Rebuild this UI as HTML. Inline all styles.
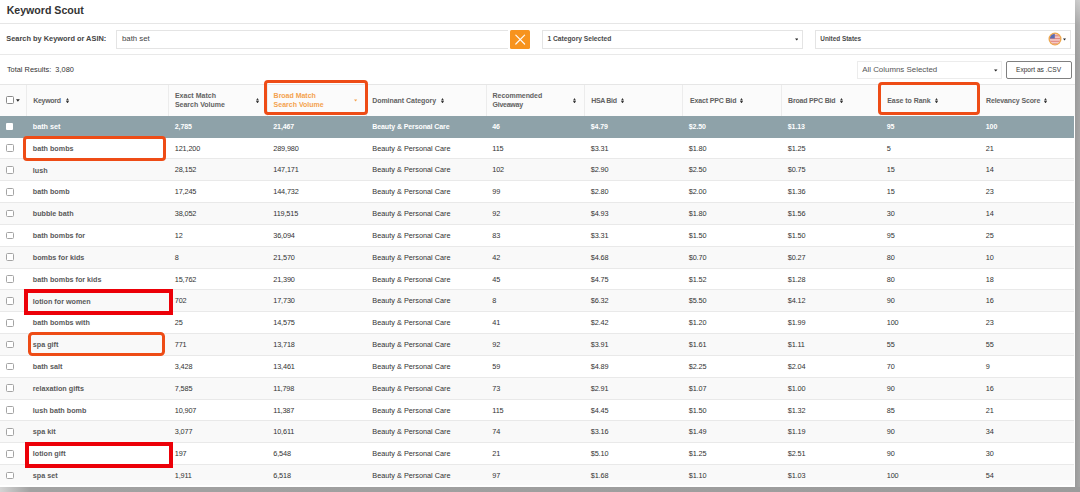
<!DOCTYPE html>
<html><head><meta charset="utf-8"><style>
html,body{margin:0;padding:0;}
body{width:1080px;height:492px;position:relative;overflow:hidden;background:#a4a4a4;font-family:"Liberation Sans", sans-serif;}
.t{position:absolute;white-space:nowrap;line-height:1;}
.b{position:absolute;}
.shr{position:absolute;left:1075px;top:0;width:5px;height:492px;background:linear-gradient(to bottom,rgba(255,255,255,0.45) 0px,rgba(255,255,255,0.1) 25px,rgba(255,255,255,0) 60px),linear-gradient(to right,#9a9a9a,#a6a6a6);}
.shb{position:absolute;left:0;top:487px;width:1080px;height:5px;background:linear-gradient(to right,#d4d4d4 0px,#a2a2a2 30px,#9c9c9c 100%);}
</style></head><body>
<div class="shr"></div><div class="shb"></div>
<div class="b" style="left:0.00px;top:0.00px;width:1075.00px;height:487.00px;background:#fff"></div>
<div class="t" style="left:6.70px;top:4.73px;font-size:10.6px;color:#333;font-weight:bold;letter-spacing:0px;">Keyword Scout</div>
<div class="b" style="left:0.00px;top:23.00px;width:1075.00px;height:1.00px;background:#e6e6e6"></div>
<div class="t" style="left:6.30px;top:34.94px;font-size:7.4px;color:#444444;font-weight:bold;letter-spacing:0px;">Search by Keyword or ASIN:</div>
<div class="b" style="left:116.30px;top:29.80px;width:391.70px;height:19.00px;border:1px solid #e4e4e4;border-right:none;box-sizing:border-box;background:#fff"></div>
<div class="t" style="left:122.00px;top:35.40px;font-size:7.8px;color:#444444;font-weight:normal;letter-spacing:0px;">bath set</div>
<div class="b" style="left:510.00px;top:30.00px;width:20.00px;height:19.00px;background:#f7931e;border-radius:1.5px"></div>
<svg class="b" style="left:510px;top:30px" width="20" height="19" viewBox="0 0 20 19"><path d="M5.8 5.2L14.6 14M14.6 5.2L5.8 14" stroke="#fff" stroke-width="1.2" stroke-linecap="round" opacity="0.95"/></svg>
<div class="b" style="left:542.00px;top:29.80px;width:261.40px;height:19.00px;border:1px solid #e4e4e4;box-sizing:border-box;background:#fff"></div>
<div class="t" style="left:547.40px;top:36.23px;font-size:6.7px;color:#4a4a4a;font-weight:bold;letter-spacing:0px;">1 Category Selected</div>
<svg class="b" style="left:794.95px;top:38.10px" width="3.5" height="3" viewBox="0 0 4 3"><path d="M0 0.3L4 0.3L2 2.7Z" fill="#222"/></svg>
<div class="b" style="left:815.20px;top:29.80px;width:256.30px;height:19.00px;border:1px solid #e4e4e4;box-sizing:border-box;background:#fff"></div>
<div class="t" style="left:820.30px;top:36.48px;font-size:6.4px;color:#4a4a4a;font-weight:bold;letter-spacing:0px;">United States</div>
<svg class="b" style="left:1047.5px;top:31.7px" width="14" height="14" viewBox="0 0 14 14"><defs><clipPath id="fc"><circle cx="7" cy="7" r="5.2"/></clipPath></defs><circle cx="7" cy="7" r="6.5" fill="#eda84e"/><g clip-path="url(#fc)"><rect x="0" y="0" width="14" height="14" fill="#f3c9c4"/><rect x="0" y="3.2" width="14" height="1.1" fill="#e48a86"/><rect x="0" y="6" width="14" height="1.1" fill="#e48a86"/><rect x="0" y="8.8" width="14" height="1.1" fill="#e48a86"/><rect x="0" y="11.2" width="14" height="2" fill="#ec9a80"/><rect x="0" y="0" width="6.8" height="6.5" fill="#5a6cb2"/></g></svg>
<svg class="b" style="left:1063.20px;top:37.90px" width="3" height="3" viewBox="0 0 4 3"><path d="M0 0.3L4 0.3L2 2.7Z" fill="#222"/></svg>
<div class="b" style="left:0.00px;top:54.00px;width:1075.00px;height:1.00px;background:#e9e9e9"></div>
<div class="t" style="left:6.90px;top:66.34px;font-size:7.4px;color:#333333;font-weight:normal;letter-spacing:0px;">Total Results:&nbsp; 3,080</div>
<div class="b" style="left:857.30px;top:61.30px;width:144.90px;height:17.30px;border:1px solid #ececec;box-sizing:border-box;background:#fff"></div>
<div class="t" style="left:862.20px;top:66.21px;font-size:7.9px;color:#555;font-weight:normal;letter-spacing:0px;">All Columns Selected</div>
<svg class="b" style="left:994.25px;top:69.00px" width="3.5" height="3" viewBox="0 0 4 3"><path d="M0 0.3L4 0.3L2 2.7Z" fill="#222"/></svg>
<div class="b" style="left:1005.50px;top:61.30px;width:66.00px;height:17.30px;border:1px solid #808080;box-sizing:border-box;border-radius:2px;background:#fff"></div>
<div class="t" style="left:1016.00px;top:67.11px;font-size:6.6px;color:#333;font-weight:normal;letter-spacing:0px;">Export as .CSV</div>
<div class="b" style="left:0.00px;top:84.30px;width:1075.00px;height:31.50px;background:#fbfbfb;border-top:1px solid #e6e6e6;box-sizing:border-box"></div>
<div class="b" style="left:26.00px;top:85.30px;width:1.00px;height:30.50px;background:#ececec"></div>
<div class="b" style="left:168.00px;top:85.30px;width:1.00px;height:30.50px;background:#ececec"></div>
<div class="b" style="left:266.50px;top:85.30px;width:1.00px;height:30.50px;background:#ececec"></div>
<div class="b" style="left:365.50px;top:85.30px;width:1.00px;height:30.50px;background:#ececec"></div>
<div class="b" style="left:485.50px;top:85.30px;width:1.00px;height:30.50px;background:#ececec"></div>
<div class="b" style="left:584.00px;top:85.30px;width:1.00px;height:30.50px;background:#ececec"></div>
<div class="b" style="left:682.00px;top:85.30px;width:1.00px;height:30.50px;background:#ececec"></div>
<div class="b" style="left:781.00px;top:85.30px;width:1.00px;height:30.50px;background:#ececec"></div>
<div class="b" style="left:880.00px;top:85.30px;width:1.00px;height:30.50px;background:#ececec"></div>
<div class="b" style="left:979.00px;top:85.30px;width:1.00px;height:30.50px;background:#ececec"></div>
<div class="b" style="left:6.10px;top:96.10px;width:7.50px;height:7.50px;border:1px solid #8a8a8a;box-sizing:border-box;border-radius:1.5px;background:#fff"></div>
<svg class="b" style="left:16.10px;top:98.70px" width="3.8" height="3" viewBox="0 0 4 3"><path d="M0 0.3L4 0.3L2 2.7Z" fill="#222"/></svg>
<div class="t" style="left:33.20px;top:96.97px;font-size:7px;color:#626262;font-weight:bold;letter-spacing:-0.29px;">Keyword</div>
<svg class="b" style="left:65.50px;top:97.60px" width="3" height="5.6" viewBox="0 0 3 5.6"><path d="M0 2.5L1.5 0L3 2.5Z M0 3.1L1.5 5.6L3 3.1Z" fill="#3a3a3a"/></svg>
<div class="t" style="left:174.90px;top:91.87px;font-size:7px;color:#626262;font-weight:bold;letter-spacing:0.03px;">Exact Match</div>
<div class="t" style="left:174.90px;top:101.07px;font-size:7px;color:#626262;font-weight:bold;letter-spacing:0px;">Search Volume</div>
<svg class="b" style="left:255.90px;top:97.60px" width="3" height="5.6" viewBox="0 0 3 5.6"><path d="M0 2.5L1.5 0L3 2.5Z M0 3.1L1.5 5.6L3 3.1Z" fill="#3a3a3a"/></svg>
<div class="t" style="left:273.60px;top:91.87px;font-size:7px;color:#f4a24e;font-weight:bold;letter-spacing:-0.02px;">Broad Match</div>
<div class="t" style="left:273.60px;top:101.07px;font-size:7px;color:#f4a24e;font-weight:bold;letter-spacing:0px;">Search Volume</div>
<svg class="b" style="left:354.40px;top:98.90px" width="3.2" height="3" viewBox="0 0 4 3"><path d="M0 0.3L4 0.3L2 2.7Z" fill="#f4a24e"/></svg>
<div class="t" style="left:372.20px;top:96.97px;font-size:7px;color:#626262;font-weight:bold;letter-spacing:-0.04px;">Dominant Category</div>
<svg class="b" style="left:440.70px;top:97.60px" width="3" height="5.6" viewBox="0 0 3 5.6"><path d="M0 2.5L1.5 0L3 2.5Z M0 3.1L1.5 5.6L3 3.1Z" fill="#3a3a3a"/></svg>
<div class="t" style="left:492.60px;top:91.87px;font-size:7px;color:#626262;font-weight:bold;letter-spacing:-0.06px;">Recommended</div>
<div class="t" style="left:492.60px;top:101.07px;font-size:7px;color:#626262;font-weight:bold;letter-spacing:-0.26px;">Giveaway</div>
<svg class="b" style="left:573.10px;top:97.60px" width="3" height="5.6" viewBox="0 0 3 5.6"><path d="M0 2.5L1.5 0L3 2.5Z M0 3.1L1.5 5.6L3 3.1Z" fill="#3a3a3a"/></svg>
<div class="t" style="left:591.20px;top:96.97px;font-size:7px;color:#626262;font-weight:bold;letter-spacing:-0.32px;">HSA Bid</div>
<svg class="b" style="left:621.30px;top:97.60px" width="3" height="5.6" viewBox="0 0 3 5.6"><path d="M0 2.5L1.5 0L3 2.5Z M0 3.1L1.5 5.6L3 3.1Z" fill="#3a3a3a"/></svg>
<div class="t" style="left:690.00px;top:96.97px;font-size:7px;color:#626262;font-weight:bold;letter-spacing:-0.15px;">Exact PPC Bid</div>
<svg class="b" style="left:740.40px;top:97.60px" width="3" height="5.6" viewBox="0 0 3 5.6"><path d="M0 2.5L1.5 0L3 2.5Z M0 3.1L1.5 5.6L3 3.1Z" fill="#3a3a3a"/></svg>
<div class="t" style="left:788.00px;top:96.97px;font-size:7px;color:#626262;font-weight:bold;letter-spacing:-0.18px;">Broad PPC Bid</div>
<svg class="b" style="left:839.60px;top:97.60px" width="3" height="5.6" viewBox="0 0 3 5.6"><path d="M0 2.5L1.5 0L3 2.5Z M0 3.1L1.5 5.6L3 3.1Z" fill="#3a3a3a"/></svg>
<div class="t" style="left:887.20px;top:96.97px;font-size:7px;color:#626262;font-weight:bold;letter-spacing:-0.04px;">Ease to Rank</div>
<svg class="b" style="left:934.90px;top:97.60px" width="3" height="5.6" viewBox="0 0 3 5.6"><path d="M0 2.5L1.5 0L3 2.5Z M0 3.1L1.5 5.6L3 3.1Z" fill="#3a3a3a"/></svg>
<div class="t" style="left:986.00px;top:96.97px;font-size:7px;color:#626262;font-weight:bold;letter-spacing:-0.12px;">Relevancy Score</div>
<svg class="b" style="left:1044.30px;top:97.60px" width="3" height="5.6" viewBox="0 0 3 5.6"><path d="M0 2.5L1.5 0L3 2.5Z M0 3.1L1.5 5.6L3 3.1Z" fill="#3a3a3a"/></svg>
<div class="b" style="left:0.00px;top:115.80px;width:1074.00px;height:21.83px;background:#8ea2a9"></div>
<div class="b" style="left:6.30px;top:122.91px;width:7.20px;height:6.80px;background:#fff;border-radius:1px"></div>
<div class="t" style="left:32.80px;top:122.91px;font-size:7.2px;color:#ffffff;font-weight:bold;letter-spacing:0px;">bath set</div>
<div class="t" style="left:174.80px;top:123.07px;font-size:7.0px;color:#ffffff;font-weight:bold;letter-spacing:-0.1px;">2,785</div>
<div class="t" style="left:273.30px;top:123.07px;font-size:7.0px;color:#ffffff;font-weight:bold;letter-spacing:-0.1px;">21,467</div>
<div class="t" style="left:372.30px;top:123.07px;font-size:7.0px;color:#ffffff;font-weight:bold;letter-spacing:-0.1px;">Beauty &amp; Personal Care</div>
<div class="t" style="left:492.30px;top:123.07px;font-size:7.0px;color:#ffffff;font-weight:bold;letter-spacing:-0.1px;">46</div>
<div class="t" style="left:590.80px;top:123.07px;font-size:7.0px;color:#ffffff;font-weight:bold;letter-spacing:-0.1px;">$4.79</div>
<div class="t" style="left:688.80px;top:123.07px;font-size:7.0px;color:#ffffff;font-weight:bold;letter-spacing:-0.1px;">$2.50</div>
<div class="t" style="left:787.80px;top:123.07px;font-size:7.0px;color:#ffffff;font-weight:bold;letter-spacing:-0.1px;">$1.13</div>
<div class="t" style="left:886.80px;top:123.07px;font-size:7.0px;color:#ffffff;font-weight:bold;letter-spacing:-0.1px;">95</div>
<div class="t" style="left:985.80px;top:123.07px;font-size:7.0px;color:#ffffff;font-weight:bold;letter-spacing:-0.1px;">100</div>
<div class="b" style="left:0.00px;top:137.62px;width:1074.00px;height:21.82px;background:#ffffff"></div>
<div class="b" style="left:0.00px;top:158.45px;width:1074.00px;height:1.00px;background:#e9e9e9"></div>
<div class="b" style="left:6.10px;top:144.29px;width:7.70px;height:7.70px;border:1px solid #a4a4a4;box-sizing:border-box;border-radius:1.5px;background:#fff"></div>
<div class="t" style="left:32.80px;top:144.73px;font-size:7.2px;color:#5a5a5a;font-weight:bold;letter-spacing:0px;">bath bombs</div>
<div class="t" style="left:174.80px;top:144.65px;font-size:7.3px;color:#333333;font-weight:normal;letter-spacing:-0.15px;">121,200</div>
<div class="t" style="left:273.30px;top:144.65px;font-size:7.3px;color:#333333;font-weight:normal;letter-spacing:-0.15px;">289,980</div>
<div class="t" style="left:372.30px;top:144.65px;font-size:7.3px;color:#333333;font-weight:normal;letter-spacing:0px;">Beauty &amp; Personal Care</div>
<div class="t" style="left:492.30px;top:144.65px;font-size:7.3px;color:#333333;font-weight:normal;letter-spacing:-0.15px;">115</div>
<div class="t" style="left:590.80px;top:144.65px;font-size:7.3px;color:#333333;font-weight:normal;letter-spacing:-0.15px;">$3.31</div>
<div class="t" style="left:688.80px;top:144.65px;font-size:7.3px;color:#333333;font-weight:normal;letter-spacing:-0.15px;">$1.80</div>
<div class="t" style="left:787.80px;top:144.65px;font-size:7.3px;color:#333333;font-weight:normal;letter-spacing:-0.15px;">$1.25</div>
<div class="t" style="left:886.80px;top:144.65px;font-size:7.3px;color:#333333;font-weight:normal;letter-spacing:-0.15px;">5</div>
<div class="t" style="left:985.80px;top:144.65px;font-size:7.3px;color:#333333;font-weight:normal;letter-spacing:-0.15px;">21</div>
<div class="b" style="left:0.00px;top:159.45px;width:1074.00px;height:21.82px;background:#f9f9f9"></div>
<div class="b" style="left:0.00px;top:180.27px;width:1074.00px;height:1.00px;background:#e9e9e9"></div>
<div class="b" style="left:6.10px;top:166.11px;width:7.70px;height:7.70px;border:1px solid #a4a4a4;box-sizing:border-box;border-radius:1.5px;background:#fff"></div>
<div class="t" style="left:32.80px;top:166.56px;font-size:7.2px;color:#5a5a5a;font-weight:bold;letter-spacing:0px;">lush</div>
<div class="t" style="left:174.80px;top:166.47px;font-size:7.3px;color:#333333;font-weight:normal;letter-spacing:-0.15px;">28,152</div>
<div class="t" style="left:273.30px;top:166.47px;font-size:7.3px;color:#333333;font-weight:normal;letter-spacing:-0.15px;">147,171</div>
<div class="t" style="left:372.30px;top:166.47px;font-size:7.3px;color:#333333;font-weight:normal;letter-spacing:0px;">Beauty &amp; Personal Care</div>
<div class="t" style="left:492.30px;top:166.47px;font-size:7.3px;color:#333333;font-weight:normal;letter-spacing:-0.15px;">102</div>
<div class="t" style="left:590.80px;top:166.47px;font-size:7.3px;color:#333333;font-weight:normal;letter-spacing:-0.15px;">$2.90</div>
<div class="t" style="left:688.80px;top:166.47px;font-size:7.3px;color:#333333;font-weight:normal;letter-spacing:-0.15px;">$2.50</div>
<div class="t" style="left:787.80px;top:166.47px;font-size:7.3px;color:#333333;font-weight:normal;letter-spacing:-0.15px;">$0.75</div>
<div class="t" style="left:886.80px;top:166.47px;font-size:7.3px;color:#333333;font-weight:normal;letter-spacing:-0.15px;">15</div>
<div class="t" style="left:985.80px;top:166.47px;font-size:7.3px;color:#333333;font-weight:normal;letter-spacing:-0.15px;">14</div>
<div class="b" style="left:0.00px;top:181.27px;width:1074.00px;height:21.82px;background:#ffffff"></div>
<div class="b" style="left:0.00px;top:202.10px;width:1074.00px;height:1.00px;background:#e9e9e9"></div>
<div class="b" style="left:6.10px;top:187.94px;width:7.70px;height:7.70px;border:1px solid #a4a4a4;box-sizing:border-box;border-radius:1.5px;background:#fff"></div>
<div class="t" style="left:32.80px;top:188.38px;font-size:7.2px;color:#5a5a5a;font-weight:bold;letter-spacing:0px;">bath bomb</div>
<div class="t" style="left:174.80px;top:188.30px;font-size:7.3px;color:#333333;font-weight:normal;letter-spacing:-0.15px;">17,245</div>
<div class="t" style="left:273.30px;top:188.30px;font-size:7.3px;color:#333333;font-weight:normal;letter-spacing:-0.15px;">144,732</div>
<div class="t" style="left:372.30px;top:188.30px;font-size:7.3px;color:#333333;font-weight:normal;letter-spacing:0px;">Beauty &amp; Personal Care</div>
<div class="t" style="left:492.30px;top:188.30px;font-size:7.3px;color:#333333;font-weight:normal;letter-spacing:-0.15px;">99</div>
<div class="t" style="left:590.80px;top:188.30px;font-size:7.3px;color:#333333;font-weight:normal;letter-spacing:-0.15px;">$2.80</div>
<div class="t" style="left:688.80px;top:188.30px;font-size:7.3px;color:#333333;font-weight:normal;letter-spacing:-0.15px;">$2.00</div>
<div class="t" style="left:787.80px;top:188.30px;font-size:7.3px;color:#333333;font-weight:normal;letter-spacing:-0.15px;">$1.36</div>
<div class="t" style="left:886.80px;top:188.30px;font-size:7.3px;color:#333333;font-weight:normal;letter-spacing:-0.15px;">15</div>
<div class="t" style="left:985.80px;top:188.30px;font-size:7.3px;color:#333333;font-weight:normal;letter-spacing:-0.15px;">23</div>
<div class="b" style="left:0.00px;top:203.10px;width:1074.00px;height:21.82px;background:#f9f9f9"></div>
<div class="b" style="left:0.00px;top:223.92px;width:1074.00px;height:1.00px;background:#e9e9e9"></div>
<div class="b" style="left:6.10px;top:209.76px;width:7.70px;height:7.70px;border:1px solid #a4a4a4;box-sizing:border-box;border-radius:1.5px;background:#fff"></div>
<div class="t" style="left:32.80px;top:210.21px;font-size:7.2px;color:#5a5a5a;font-weight:bold;letter-spacing:0px;">bubble bath</div>
<div class="t" style="left:174.80px;top:210.12px;font-size:7.3px;color:#333333;font-weight:normal;letter-spacing:-0.15px;">38,052</div>
<div class="t" style="left:273.30px;top:210.12px;font-size:7.3px;color:#333333;font-weight:normal;letter-spacing:-0.15px;">119,515</div>
<div class="t" style="left:372.30px;top:210.12px;font-size:7.3px;color:#333333;font-weight:normal;letter-spacing:0px;">Beauty &amp; Personal Care</div>
<div class="t" style="left:492.30px;top:210.12px;font-size:7.3px;color:#333333;font-weight:normal;letter-spacing:-0.15px;">92</div>
<div class="t" style="left:590.80px;top:210.12px;font-size:7.3px;color:#333333;font-weight:normal;letter-spacing:-0.15px;">$4.93</div>
<div class="t" style="left:688.80px;top:210.12px;font-size:7.3px;color:#333333;font-weight:normal;letter-spacing:-0.15px;">$1.80</div>
<div class="t" style="left:787.80px;top:210.12px;font-size:7.3px;color:#333333;font-weight:normal;letter-spacing:-0.15px;">$1.56</div>
<div class="t" style="left:886.80px;top:210.12px;font-size:7.3px;color:#333333;font-weight:normal;letter-spacing:-0.15px;">30</div>
<div class="t" style="left:985.80px;top:210.12px;font-size:7.3px;color:#333333;font-weight:normal;letter-spacing:-0.15px;">14</div>
<div class="b" style="left:0.00px;top:224.93px;width:1074.00px;height:21.82px;background:#ffffff"></div>
<div class="b" style="left:0.00px;top:245.75px;width:1074.00px;height:1.00px;background:#e9e9e9"></div>
<div class="b" style="left:6.10px;top:231.59px;width:7.70px;height:7.70px;border:1px solid #a4a4a4;box-sizing:border-box;border-radius:1.5px;background:#fff"></div>
<div class="t" style="left:32.80px;top:232.03px;font-size:7.2px;color:#5a5a5a;font-weight:bold;letter-spacing:0px;">bath bombs for</div>
<div class="t" style="left:174.80px;top:231.95px;font-size:7.3px;color:#333333;font-weight:normal;letter-spacing:-0.15px;">12</div>
<div class="t" style="left:273.30px;top:231.95px;font-size:7.3px;color:#333333;font-weight:normal;letter-spacing:-0.15px;">36,094</div>
<div class="t" style="left:372.30px;top:231.95px;font-size:7.3px;color:#333333;font-weight:normal;letter-spacing:0px;">Beauty &amp; Personal Care</div>
<div class="t" style="left:492.30px;top:231.95px;font-size:7.3px;color:#333333;font-weight:normal;letter-spacing:-0.15px;">83</div>
<div class="t" style="left:590.80px;top:231.95px;font-size:7.3px;color:#333333;font-weight:normal;letter-spacing:-0.15px;">$3.31</div>
<div class="t" style="left:688.80px;top:231.95px;font-size:7.3px;color:#333333;font-weight:normal;letter-spacing:-0.15px;">$1.50</div>
<div class="t" style="left:787.80px;top:231.95px;font-size:7.3px;color:#333333;font-weight:normal;letter-spacing:-0.15px;">$1.50</div>
<div class="t" style="left:886.80px;top:231.95px;font-size:7.3px;color:#333333;font-weight:normal;letter-spacing:-0.15px;">95</div>
<div class="t" style="left:985.80px;top:231.95px;font-size:7.3px;color:#333333;font-weight:normal;letter-spacing:-0.15px;">25</div>
<div class="b" style="left:0.00px;top:246.75px;width:1074.00px;height:21.82px;background:#f9f9f9"></div>
<div class="b" style="left:0.00px;top:267.57px;width:1074.00px;height:1.00px;background:#e9e9e9"></div>
<div class="b" style="left:6.10px;top:253.41px;width:7.70px;height:7.70px;border:1px solid #a4a4a4;box-sizing:border-box;border-radius:1.5px;background:#fff"></div>
<div class="t" style="left:32.80px;top:253.86px;font-size:7.2px;color:#5a5a5a;font-weight:bold;letter-spacing:0px;">bombs for kids</div>
<div class="t" style="left:174.80px;top:253.77px;font-size:7.3px;color:#333333;font-weight:normal;letter-spacing:-0.15px;">8</div>
<div class="t" style="left:273.30px;top:253.77px;font-size:7.3px;color:#333333;font-weight:normal;letter-spacing:-0.15px;">21,570</div>
<div class="t" style="left:372.30px;top:253.77px;font-size:7.3px;color:#333333;font-weight:normal;letter-spacing:0px;">Beauty &amp; Personal Care</div>
<div class="t" style="left:492.30px;top:253.77px;font-size:7.3px;color:#333333;font-weight:normal;letter-spacing:-0.15px;">42</div>
<div class="t" style="left:590.80px;top:253.77px;font-size:7.3px;color:#333333;font-weight:normal;letter-spacing:-0.15px;">$4.68</div>
<div class="t" style="left:688.80px;top:253.77px;font-size:7.3px;color:#333333;font-weight:normal;letter-spacing:-0.15px;">$0.70</div>
<div class="t" style="left:787.80px;top:253.77px;font-size:7.3px;color:#333333;font-weight:normal;letter-spacing:-0.15px;">$0.27</div>
<div class="t" style="left:886.80px;top:253.77px;font-size:7.3px;color:#333333;font-weight:normal;letter-spacing:-0.15px;">80</div>
<div class="t" style="left:985.80px;top:253.77px;font-size:7.3px;color:#333333;font-weight:normal;letter-spacing:-0.15px;">10</div>
<div class="b" style="left:0.00px;top:268.57px;width:1074.00px;height:21.82px;background:#ffffff"></div>
<div class="b" style="left:0.00px;top:289.40px;width:1074.00px;height:1.00px;background:#e9e9e9"></div>
<div class="b" style="left:6.10px;top:275.24px;width:7.70px;height:7.70px;border:1px solid #a4a4a4;box-sizing:border-box;border-radius:1.5px;background:#fff"></div>
<div class="t" style="left:32.80px;top:275.68px;font-size:7.2px;color:#5a5a5a;font-weight:bold;letter-spacing:0px;">bath bombs for kids</div>
<div class="t" style="left:174.80px;top:275.60px;font-size:7.3px;color:#333333;font-weight:normal;letter-spacing:-0.15px;">15,762</div>
<div class="t" style="left:273.30px;top:275.60px;font-size:7.3px;color:#333333;font-weight:normal;letter-spacing:-0.15px;">21,390</div>
<div class="t" style="left:372.30px;top:275.60px;font-size:7.3px;color:#333333;font-weight:normal;letter-spacing:0px;">Beauty &amp; Personal Care</div>
<div class="t" style="left:492.30px;top:275.60px;font-size:7.3px;color:#333333;font-weight:normal;letter-spacing:-0.15px;">45</div>
<div class="t" style="left:590.80px;top:275.60px;font-size:7.3px;color:#333333;font-weight:normal;letter-spacing:-0.15px;">$4.75</div>
<div class="t" style="left:688.80px;top:275.60px;font-size:7.3px;color:#333333;font-weight:normal;letter-spacing:-0.15px;">$1.52</div>
<div class="t" style="left:787.80px;top:275.60px;font-size:7.3px;color:#333333;font-weight:normal;letter-spacing:-0.15px;">$1.28</div>
<div class="t" style="left:886.80px;top:275.60px;font-size:7.3px;color:#333333;font-weight:normal;letter-spacing:-0.15px;">80</div>
<div class="t" style="left:985.80px;top:275.60px;font-size:7.3px;color:#333333;font-weight:normal;letter-spacing:-0.15px;">18</div>
<div class="b" style="left:0.00px;top:290.40px;width:1074.00px;height:21.82px;background:#f9f9f9"></div>
<div class="b" style="left:0.00px;top:311.22px;width:1074.00px;height:1.00px;background:#e9e9e9"></div>
<div class="b" style="left:6.10px;top:297.06px;width:7.70px;height:7.70px;border:1px solid #a4a4a4;box-sizing:border-box;border-radius:1.5px;background:#fff"></div>
<div class="t" style="left:32.80px;top:297.51px;font-size:7.2px;color:#5a5a5a;font-weight:bold;letter-spacing:0px;">lotion for women</div>
<div class="t" style="left:174.80px;top:297.42px;font-size:7.3px;color:#333333;font-weight:normal;letter-spacing:-0.15px;">702</div>
<div class="t" style="left:273.30px;top:297.42px;font-size:7.3px;color:#333333;font-weight:normal;letter-spacing:-0.15px;">17,730</div>
<div class="t" style="left:372.30px;top:297.42px;font-size:7.3px;color:#333333;font-weight:normal;letter-spacing:0px;">Beauty &amp; Personal Care</div>
<div class="t" style="left:492.30px;top:297.42px;font-size:7.3px;color:#333333;font-weight:normal;letter-spacing:-0.15px;">8</div>
<div class="t" style="left:590.80px;top:297.42px;font-size:7.3px;color:#333333;font-weight:normal;letter-spacing:-0.15px;">$6.32</div>
<div class="t" style="left:688.80px;top:297.42px;font-size:7.3px;color:#333333;font-weight:normal;letter-spacing:-0.15px;">$5.50</div>
<div class="t" style="left:787.80px;top:297.42px;font-size:7.3px;color:#333333;font-weight:normal;letter-spacing:-0.15px;">$4.12</div>
<div class="t" style="left:886.80px;top:297.42px;font-size:7.3px;color:#333333;font-weight:normal;letter-spacing:-0.15px;">90</div>
<div class="t" style="left:985.80px;top:297.42px;font-size:7.3px;color:#333333;font-weight:normal;letter-spacing:-0.15px;">16</div>
<div class="b" style="left:0.00px;top:312.22px;width:1074.00px;height:21.82px;background:#ffffff"></div>
<div class="b" style="left:0.00px;top:333.05px;width:1074.00px;height:1.00px;background:#e9e9e9"></div>
<div class="b" style="left:6.10px;top:318.89px;width:7.70px;height:7.70px;border:1px solid #a4a4a4;box-sizing:border-box;border-radius:1.5px;background:#fff"></div>
<div class="t" style="left:32.80px;top:319.33px;font-size:7.2px;color:#5a5a5a;font-weight:bold;letter-spacing:0px;">bath bombs with</div>
<div class="t" style="left:174.80px;top:319.25px;font-size:7.3px;color:#333333;font-weight:normal;letter-spacing:-0.15px;">25</div>
<div class="t" style="left:273.30px;top:319.25px;font-size:7.3px;color:#333333;font-weight:normal;letter-spacing:-0.15px;">14,575</div>
<div class="t" style="left:372.30px;top:319.25px;font-size:7.3px;color:#333333;font-weight:normal;letter-spacing:0px;">Beauty &amp; Personal Care</div>
<div class="t" style="left:492.30px;top:319.25px;font-size:7.3px;color:#333333;font-weight:normal;letter-spacing:-0.15px;">41</div>
<div class="t" style="left:590.80px;top:319.25px;font-size:7.3px;color:#333333;font-weight:normal;letter-spacing:-0.15px;">$2.42</div>
<div class="t" style="left:688.80px;top:319.25px;font-size:7.3px;color:#333333;font-weight:normal;letter-spacing:-0.15px;">$1.20</div>
<div class="t" style="left:787.80px;top:319.25px;font-size:7.3px;color:#333333;font-weight:normal;letter-spacing:-0.15px;">$1.99</div>
<div class="t" style="left:886.80px;top:319.25px;font-size:7.3px;color:#333333;font-weight:normal;letter-spacing:-0.15px;">100</div>
<div class="t" style="left:985.80px;top:319.25px;font-size:7.3px;color:#333333;font-weight:normal;letter-spacing:-0.15px;">23</div>
<div class="b" style="left:0.00px;top:334.05px;width:1074.00px;height:21.82px;background:#f9f9f9"></div>
<div class="b" style="left:0.00px;top:354.88px;width:1074.00px;height:1.00px;background:#e9e9e9"></div>
<div class="b" style="left:6.10px;top:340.71px;width:7.70px;height:7.70px;border:1px solid #a4a4a4;box-sizing:border-box;border-radius:1.5px;background:#fff"></div>
<div class="t" style="left:32.80px;top:341.16px;font-size:7.2px;color:#5a5a5a;font-weight:bold;letter-spacing:0px;">spa gift</div>
<div class="t" style="left:174.80px;top:341.07px;font-size:7.3px;color:#333333;font-weight:normal;letter-spacing:-0.15px;">771</div>
<div class="t" style="left:273.30px;top:341.07px;font-size:7.3px;color:#333333;font-weight:normal;letter-spacing:-0.15px;">13,718</div>
<div class="t" style="left:372.30px;top:341.07px;font-size:7.3px;color:#333333;font-weight:normal;letter-spacing:0px;">Beauty &amp; Personal Care</div>
<div class="t" style="left:492.30px;top:341.07px;font-size:7.3px;color:#333333;font-weight:normal;letter-spacing:-0.15px;">92</div>
<div class="t" style="left:590.80px;top:341.07px;font-size:7.3px;color:#333333;font-weight:normal;letter-spacing:-0.15px;">$3.91</div>
<div class="t" style="left:688.80px;top:341.07px;font-size:7.3px;color:#333333;font-weight:normal;letter-spacing:-0.15px;">$1.61</div>
<div class="t" style="left:787.80px;top:341.07px;font-size:7.3px;color:#333333;font-weight:normal;letter-spacing:-0.15px;">$1.11</div>
<div class="t" style="left:886.80px;top:341.07px;font-size:7.3px;color:#333333;font-weight:normal;letter-spacing:-0.15px;">55</div>
<div class="t" style="left:985.80px;top:341.07px;font-size:7.3px;color:#333333;font-weight:normal;letter-spacing:-0.15px;">55</div>
<div class="b" style="left:0.00px;top:355.88px;width:1074.00px;height:21.82px;background:#ffffff"></div>
<div class="b" style="left:0.00px;top:376.70px;width:1074.00px;height:1.00px;background:#e9e9e9"></div>
<div class="b" style="left:6.10px;top:362.54px;width:7.70px;height:7.70px;border:1px solid #a4a4a4;box-sizing:border-box;border-radius:1.5px;background:#fff"></div>
<div class="t" style="left:32.80px;top:362.98px;font-size:7.2px;color:#5a5a5a;font-weight:bold;letter-spacing:0px;">bath salt</div>
<div class="t" style="left:174.80px;top:362.90px;font-size:7.3px;color:#333333;font-weight:normal;letter-spacing:-0.15px;">3,428</div>
<div class="t" style="left:273.30px;top:362.90px;font-size:7.3px;color:#333333;font-weight:normal;letter-spacing:-0.15px;">13,461</div>
<div class="t" style="left:372.30px;top:362.90px;font-size:7.3px;color:#333333;font-weight:normal;letter-spacing:0px;">Beauty &amp; Personal Care</div>
<div class="t" style="left:492.30px;top:362.90px;font-size:7.3px;color:#333333;font-weight:normal;letter-spacing:-0.15px;">59</div>
<div class="t" style="left:590.80px;top:362.90px;font-size:7.3px;color:#333333;font-weight:normal;letter-spacing:-0.15px;">$4.89</div>
<div class="t" style="left:688.80px;top:362.90px;font-size:7.3px;color:#333333;font-weight:normal;letter-spacing:-0.15px;">$2.25</div>
<div class="t" style="left:787.80px;top:362.90px;font-size:7.3px;color:#333333;font-weight:normal;letter-spacing:-0.15px;">$2.04</div>
<div class="t" style="left:886.80px;top:362.90px;font-size:7.3px;color:#333333;font-weight:normal;letter-spacing:-0.15px;">70</div>
<div class="t" style="left:985.80px;top:362.90px;font-size:7.3px;color:#333333;font-weight:normal;letter-spacing:-0.15px;">9</div>
<div class="b" style="left:0.00px;top:377.70px;width:1074.00px;height:21.82px;background:#f9f9f9"></div>
<div class="b" style="left:0.00px;top:398.52px;width:1074.00px;height:1.00px;background:#e9e9e9"></div>
<div class="b" style="left:6.10px;top:384.36px;width:7.70px;height:7.70px;border:1px solid #a4a4a4;box-sizing:border-box;border-radius:1.5px;background:#fff"></div>
<div class="t" style="left:32.80px;top:384.81px;font-size:7.2px;color:#5a5a5a;font-weight:bold;letter-spacing:0px;">relaxation gifts</div>
<div class="t" style="left:174.80px;top:384.72px;font-size:7.3px;color:#333333;font-weight:normal;letter-spacing:-0.15px;">7,585</div>
<div class="t" style="left:273.30px;top:384.72px;font-size:7.3px;color:#333333;font-weight:normal;letter-spacing:-0.15px;">11,798</div>
<div class="t" style="left:372.30px;top:384.72px;font-size:7.3px;color:#333333;font-weight:normal;letter-spacing:0px;">Beauty &amp; Personal Care</div>
<div class="t" style="left:492.30px;top:384.72px;font-size:7.3px;color:#333333;font-weight:normal;letter-spacing:-0.15px;">73</div>
<div class="t" style="left:590.80px;top:384.72px;font-size:7.3px;color:#333333;font-weight:normal;letter-spacing:-0.15px;">$2.91</div>
<div class="t" style="left:688.80px;top:384.72px;font-size:7.3px;color:#333333;font-weight:normal;letter-spacing:-0.15px;">$1.07</div>
<div class="t" style="left:787.80px;top:384.72px;font-size:7.3px;color:#333333;font-weight:normal;letter-spacing:-0.15px;">$1.00</div>
<div class="t" style="left:886.80px;top:384.72px;font-size:7.3px;color:#333333;font-weight:normal;letter-spacing:-0.15px;">90</div>
<div class="t" style="left:985.80px;top:384.72px;font-size:7.3px;color:#333333;font-weight:normal;letter-spacing:-0.15px;">16</div>
<div class="b" style="left:0.00px;top:399.52px;width:1074.00px;height:21.82px;background:#ffffff"></div>
<div class="b" style="left:0.00px;top:420.35px;width:1074.00px;height:1.00px;background:#e9e9e9"></div>
<div class="b" style="left:6.10px;top:406.19px;width:7.70px;height:7.70px;border:1px solid #a4a4a4;box-sizing:border-box;border-radius:1.5px;background:#fff"></div>
<div class="t" style="left:32.80px;top:406.63px;font-size:7.2px;color:#5a5a5a;font-weight:bold;letter-spacing:0px;">lush bath bomb</div>
<div class="t" style="left:174.80px;top:406.55px;font-size:7.3px;color:#333333;font-weight:normal;letter-spacing:-0.15px;">10,907</div>
<div class="t" style="left:273.30px;top:406.55px;font-size:7.3px;color:#333333;font-weight:normal;letter-spacing:-0.15px;">11,387</div>
<div class="t" style="left:372.30px;top:406.55px;font-size:7.3px;color:#333333;font-weight:normal;letter-spacing:0px;">Beauty &amp; Personal Care</div>
<div class="t" style="left:492.30px;top:406.55px;font-size:7.3px;color:#333333;font-weight:normal;letter-spacing:-0.15px;">115</div>
<div class="t" style="left:590.80px;top:406.55px;font-size:7.3px;color:#333333;font-weight:normal;letter-spacing:-0.15px;">$4.45</div>
<div class="t" style="left:688.80px;top:406.55px;font-size:7.3px;color:#333333;font-weight:normal;letter-spacing:-0.15px;">$1.50</div>
<div class="t" style="left:787.80px;top:406.55px;font-size:7.3px;color:#333333;font-weight:normal;letter-spacing:-0.15px;">$1.32</div>
<div class="t" style="left:886.80px;top:406.55px;font-size:7.3px;color:#333333;font-weight:normal;letter-spacing:-0.15px;">85</div>
<div class="t" style="left:985.80px;top:406.55px;font-size:7.3px;color:#333333;font-weight:normal;letter-spacing:-0.15px;">21</div>
<div class="b" style="left:0.00px;top:421.35px;width:1074.00px;height:21.82px;background:#f9f9f9"></div>
<div class="b" style="left:0.00px;top:442.18px;width:1074.00px;height:1.00px;background:#e9e9e9"></div>
<div class="b" style="left:6.10px;top:428.01px;width:7.70px;height:7.70px;border:1px solid #a4a4a4;box-sizing:border-box;border-radius:1.5px;background:#fff"></div>
<div class="t" style="left:32.80px;top:428.46px;font-size:7.2px;color:#5a5a5a;font-weight:bold;letter-spacing:0px;">spa kit</div>
<div class="t" style="left:174.80px;top:428.37px;font-size:7.3px;color:#333333;font-weight:normal;letter-spacing:-0.15px;">3,077</div>
<div class="t" style="left:273.30px;top:428.37px;font-size:7.3px;color:#333333;font-weight:normal;letter-spacing:-0.15px;">10,611</div>
<div class="t" style="left:372.30px;top:428.37px;font-size:7.3px;color:#333333;font-weight:normal;letter-spacing:0px;">Beauty &amp; Personal Care</div>
<div class="t" style="left:492.30px;top:428.37px;font-size:7.3px;color:#333333;font-weight:normal;letter-spacing:-0.15px;">74</div>
<div class="t" style="left:590.80px;top:428.37px;font-size:7.3px;color:#333333;font-weight:normal;letter-spacing:-0.15px;">$3.16</div>
<div class="t" style="left:688.80px;top:428.37px;font-size:7.3px;color:#333333;font-weight:normal;letter-spacing:-0.15px;">$1.49</div>
<div class="t" style="left:787.80px;top:428.37px;font-size:7.3px;color:#333333;font-weight:normal;letter-spacing:-0.15px;">$1.19</div>
<div class="t" style="left:886.80px;top:428.37px;font-size:7.3px;color:#333333;font-weight:normal;letter-spacing:-0.15px;">90</div>
<div class="t" style="left:985.80px;top:428.37px;font-size:7.3px;color:#333333;font-weight:normal;letter-spacing:-0.15px;">34</div>
<div class="b" style="left:0.00px;top:443.18px;width:1074.00px;height:21.82px;background:#ffffff"></div>
<div class="b" style="left:0.00px;top:464.00px;width:1074.00px;height:1.00px;background:#e9e9e9"></div>
<div class="b" style="left:6.10px;top:449.84px;width:7.70px;height:7.70px;border:1px solid #a4a4a4;box-sizing:border-box;border-radius:1.5px;background:#fff"></div>
<div class="t" style="left:32.80px;top:450.28px;font-size:7.2px;color:#5a5a5a;font-weight:bold;letter-spacing:0px;">lotion gift</div>
<div class="t" style="left:174.80px;top:450.20px;font-size:7.3px;color:#333333;font-weight:normal;letter-spacing:-0.15px;">197</div>
<div class="t" style="left:273.30px;top:450.20px;font-size:7.3px;color:#333333;font-weight:normal;letter-spacing:-0.15px;">6,548</div>
<div class="t" style="left:372.30px;top:450.20px;font-size:7.3px;color:#333333;font-weight:normal;letter-spacing:0px;">Beauty &amp; Personal Care</div>
<div class="t" style="left:492.30px;top:450.20px;font-size:7.3px;color:#333333;font-weight:normal;letter-spacing:-0.15px;">21</div>
<div class="t" style="left:590.80px;top:450.20px;font-size:7.3px;color:#333333;font-weight:normal;letter-spacing:-0.15px;">$5.10</div>
<div class="t" style="left:688.80px;top:450.20px;font-size:7.3px;color:#333333;font-weight:normal;letter-spacing:-0.15px;">$1.25</div>
<div class="t" style="left:787.80px;top:450.20px;font-size:7.3px;color:#333333;font-weight:normal;letter-spacing:-0.15px;">$2.51</div>
<div class="t" style="left:886.80px;top:450.20px;font-size:7.3px;color:#333333;font-weight:normal;letter-spacing:-0.15px;">90</div>
<div class="t" style="left:985.80px;top:450.20px;font-size:7.3px;color:#333333;font-weight:normal;letter-spacing:-0.15px;">30</div>
<div class="b" style="left:0.00px;top:465.00px;width:1074.00px;height:15.00px;background:#f9f9f9"></div>
<div class="b" style="left:0.00px;top:480.00px;width:1074.00px;height:5.00px;background:#fafafa"></div>
<div class="b" style="left:6.10px;top:471.66px;width:7.70px;height:7.70px;border:1px solid #a4a4a4;box-sizing:border-box;border-radius:1.5px;background:#fff"></div>
<div class="t" style="left:32.80px;top:472.11px;font-size:7.2px;color:#5a5a5a;font-weight:bold;letter-spacing:0px;">spa set</div>
<div class="t" style="left:174.80px;top:472.02px;font-size:7.3px;color:#333333;font-weight:normal;letter-spacing:-0.15px;">1,911</div>
<div class="t" style="left:273.30px;top:472.02px;font-size:7.3px;color:#333333;font-weight:normal;letter-spacing:-0.15px;">6,518</div>
<div class="t" style="left:372.30px;top:472.02px;font-size:7.3px;color:#333333;font-weight:normal;letter-spacing:0px;">Beauty &amp; Personal Care</div>
<div class="t" style="left:492.30px;top:472.02px;font-size:7.3px;color:#333333;font-weight:normal;letter-spacing:-0.15px;">97</div>
<div class="t" style="left:590.80px;top:472.02px;font-size:7.3px;color:#333333;font-weight:normal;letter-spacing:-0.15px;">$1.68</div>
<div class="t" style="left:688.80px;top:472.02px;font-size:7.3px;color:#333333;font-weight:normal;letter-spacing:-0.15px;">$1.10</div>
<div class="t" style="left:787.80px;top:472.02px;font-size:7.3px;color:#333333;font-weight:normal;letter-spacing:-0.15px;">$1.03</div>
<div class="t" style="left:886.80px;top:472.02px;font-size:7.3px;color:#333333;font-weight:normal;letter-spacing:-0.15px;">100</div>
<div class="t" style="left:985.80px;top:472.02px;font-size:7.3px;color:#333333;font-weight:normal;letter-spacing:-0.15px;">54</div>
<div class="b" style="left:23.30px;top:135.60px;width:142.40px;height:25.00px;border:3.2px solid #ee4c16;box-sizing:border-box;border-radius:4px"></div>
<div class="b" style="left:263.90px;top:80.20px;width:104.40px;height:35.00px;border:3.2px solid #ee4c16;box-sizing:border-box;border-radius:4px"></div>
<div class="b" style="left:877.50px;top:81.80px;width:102.50px;height:33.10px;border:3.2px solid #ee4c16;box-sizing:border-box;border-radius:4px"></div>
<div class="b" style="left:24.30px;top:289.40px;width:148.40px;height:26.00px;border:4px solid #ec0008;box-sizing:border-box;border-radius:0px"></div>
<div class="b" style="left:27.70px;top:331.70px;width:136.90px;height:23.90px;border:3.2px solid #ee4c16;box-sizing:border-box;border-radius:4.5px"></div>
<div class="b" style="left:25.20px;top:441.80px;width:148.30px;height:25.80px;border:4px solid #ec0008;box-sizing:border-box;border-radius:0px"></div>
</body></html>
